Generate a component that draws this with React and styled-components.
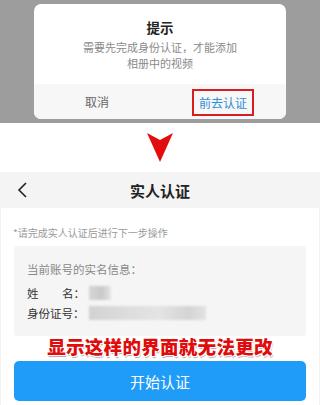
import styled, { createGlobalStyle } from "styled-components";

const GlobalStyle = createGlobalStyle`
  html, body {
    margin: 0;
    padding: 0;
    background: #fff;
  }
  body {
    font-family: "Noto Sans CJK SC", "Noto Sans", sans-serif;
  }
`;

const Page = styled.div`
  width: 320px;
  height: 405px;
  overflow: hidden;
  display: flex;
  flex-direction: column;
  background: #fff;
`;

const Overlay = styled.div`
  background: #9d9d9d;
  padding: 4px 34px 4px 34px;
  height: 123px;
  box-sizing: border-box;
`;

const Dialog = styled.div`
  background: #fff;
  border-radius: 7px;
  overflow: hidden;
  height: 115px;
  display: flex;
  flex-direction: column;
`;

const DialogBody = styled.div`
  height: 80px;
  display: flex;
  flex-direction: column;
  align-items: center;
  padding-top: 14px;
  box-sizing: border-box;
`;

const DialogTitle = styled.div`
  font-size: 13.5px;
  font-weight: bold;
  color: #222;
  line-height: 18px;
`;

const DialogText = styled.div`
  font-size: 11px;
  color: #8a8a8a;
  line-height: 16px;
  text-align: center;
  margin-top: 3px;
`;

const DialogActions = styled.div`
  flex: 1;
  display: flex;
  background: #f7f7f7;
`;

const Action = styled.div`
  flex: 1;
  display: flex;
  align-items: center;
  justify-content: center;
`;

const ActionLabel = styled.span`
  font-size: 12px;
  color: ${(p) => (p.$primary ? "#2b8fd9" : "#666")};
  ${(p) =>
    p.$primary &&
    `
    border: 2px solid #d81e1e;
    padding: 2px 5px;
    line-height: 19px;
    margin-top: 1px;
  `}
`;

const ArrowRow = styled.div`
  height: 49px;
  display: flex;
  justify-content: center;
  padding-top: 10px;
  box-sizing: border-box;
`;

const Header = styled.div`
  height: 36px;
  background: #f4f4f4;
  display: flex;
  align-items: center;
  justify-content: center;
  position: relative;
`;

const BackButton = styled.div`
  position: absolute;
  left: 16px;
  top: 10px;
  display: flex;
`;

const HeaderTitle = styled.div`
  font-size: 15px;
  font-weight: bold;
  color: #222;
`;

const Content = styled.div`
  flex: 1;
  padding: 16px 13px 0;
  display: flex;
  flex-direction: column;
  border-left: 1px solid #f2f2f2;
  border-right: 1px solid #f2f2f2;
`;

const Notice = styled.div`
  font-size: 10px;
  color: #999;
  line-height: 18px;
  margin-left: -1px;
`;

const InfoCard = styled.div`
  margin-top: 4px;
  background: #f5f5f5;
  border-radius: 3px;
  height: 90px;
  padding: 14px 13px 0;
  box-sizing: border-box;
`;

const InfoHeading = styled.div`
  font-size: 11.5px;
  color: #888;
  line-height: 18px;
  margin-bottom: 5px;
`;

const InfoRow = styled.div`
  display: flex;
  align-items: center;
  height: 20px;
`;

const InfoLabel = styled.div`
  width: 62px;
  font-size: 11.5px;
  color: #333;
  display: flex;
  justify-content: space-between;
  white-space: nowrap;
  padding-right: 4px;
  box-sizing: border-box;
`;

const Blur = styled.div`
  height: 14px;
  width: ${(p) => p.$w}px;
  background: ${(p) => p.$bg};
  filter: blur(1px);
`;

const Warning = styled.div`
  text-align: center;
  font-size: 18.5px;
  font-weight: 900;
  color: #e00c0c;
  line-height: 22px;
  margin-top: -1px;
  letter-spacing: 0.3px;
  text-shadow: 1px 1px 0 #fff, -1px -1px 0 #fff, 1px -1px 0 #fff, -1px 1px 0 #fff,
    1px 2px 1px #aaa;
  position: relative;
`;

const StartButton = styled.div`
  margin-top: 4px;
  height: 40px;
  background: #1f9cf8;
  border-radius: 5px;
  display: flex;
  align-items: center;
  justify-content: center;
  color: #fff;
  font-size: 15px;
`;

function App() {
  return (
    <Page>
      <GlobalStyle />
      <Overlay>
        <Dialog>
          <DialogBody>
            <DialogTitle>提示</DialogTitle>
            <DialogText>
              需要先完成身份认证，才能添加
              <br />
              相册中的视频
            </DialogText>
          </DialogBody>
          <DialogActions>
            <Action>
              <ActionLabel>取消</ActionLabel>
            </Action>
            <Action>
              <ActionLabel $primary>前去认证</ActionLabel>
            </Action>
          </DialogActions>
        </Dialog>
      </Overlay>
      <ArrowRow>
        <svg width="26" height="29" viewBox="0 0 26 29">
          <polygon points="0,0 13,7 26,0 13,29" fill="#e30d0d" />
        </svg>
      </ArrowRow>
      <Header>
        <BackButton>
          <svg width="12" height="16" viewBox="0 0 12 16">
            <polyline
              points="10,1 3,8 10,15"
              fill="none"
              stroke="#222"
              strokeWidth="1.6"
            />
          </svg>
        </BackButton>
        <HeaderTitle>实人认证</HeaderTitle>
      </Header>
      <Content>
        <Notice>*请完成实人认证后进行下一步操作</Notice>
        <InfoCard>
          <InfoHeading>当前账号的实名信息：</InfoHeading>
          <InfoRow>
            <InfoLabel>
              <span>姓</span>
              <span>名：</span>
            </InfoLabel>
            <Blur $w={22} $bg="linear-gradient(90deg,#d6d6d6,#c9c9c9 60%,#e6e6e6)" />
          </InfoRow>
          <InfoRow>
            <InfoLabel>
              <span>身份证号：</span>
            </InfoLabel>
            <Blur
              $w={117}
              $bg="linear-gradient(90deg,#d2d2d2,#dcdcdc 30%,#e4e4e4 60%,#d4d4d4 85%,#e2e2e2)"
            />
          </InfoRow>
        </InfoCard>
        <Warning>显示这样的界面就无法更改</Warning>
        <StartButton>开始认证</StartButton>
      </Content>
    </Page>
  );
}

export default App;
